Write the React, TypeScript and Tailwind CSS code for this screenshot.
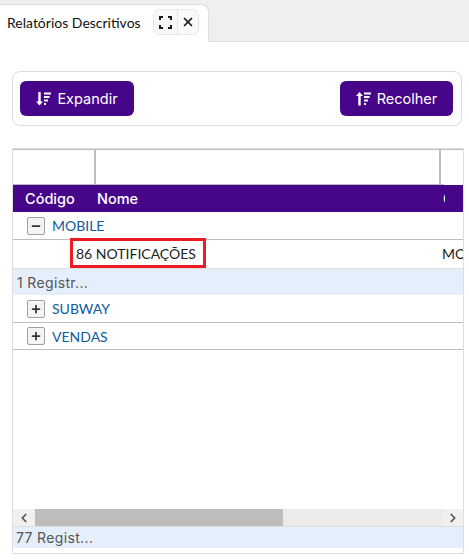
import { X, ChevronLeft, ChevronRight, Minus, Plus } from "lucide-react";

function SortIcon({ up }: { up?: boolean }) {
  return (
    <svg width="15" height="14" viewBox="0 0 15 14" fill="white" className="shrink-0">
      {up ? (
        <path d="M3.5 0 L7 4 L4.7 4 L4.7 13.5 L2.3 13.5 L2.3 4 L0 4 Z" />
      ) : (
        <path d="M3.5 13.5 L7 9.5 L4.7 9.5 L4.7 0 L2.3 0 L2.3 9.5 L0 9.5 Z" />
      )}
      <rect x="8" y="0.5" width="7" height="2" />
      <rect x="8" y="4" width="5.5" height="2" />
      <rect x="8" y="7.5" width="4" height="2" />
      <rect x="8" y="11" width="2" height="2" />
    </svg>
  );
}

function CornersIcon() {
  return (
    <svg width="13" height="13" viewBox="0 0 13 13" fill="none" stroke="#1a1a1a" strokeWidth="2">
      <path d="M1 4 V1 H4 M9 1 H12 V4 M12 9 V12 H9 M4 12 H1 V9" />
    </svg>
  );
}

function ToolButton({ label, up, width }: { label: string; up?: boolean; width: string }) {
  return (
    <button className={`flex h-[35px] ${width} items-center justify-center gap-[6px] rounded-md bg-[#47068a] font-['Inter',sans-serif] text-[14.5px] text-white`}>
      <SortIcon up={up} />
      {label}
    </button>
  );
}

function GroupRow({ name, open, height = "h-[28px]" }: { name: string; open?: boolean; height?: string }) {
  return (
    <div className={`flex ${height} shrink-0 items-center border-b border-[#bdbdbd] pl-[14px]`}>
      <span className="flex h-[18px] w-[18px] items-center justify-center rounded-[2px] border border-[#a0a0a0] bg-[#f4f4f4] text-[#333]">
        {open ? <Minus size={12} strokeWidth={3.5} /> : <Plus size={12} strokeWidth={3.5} />}
      </span>
      <span className="ml-[7px] text-[14px] text-[#0f5a9c]">{name}</span>
    </div>
  );
}

export default function App() {
  return (
    <div className="flex h-[560px] w-[469px] flex-col overflow-hidden bg-white font-['Lato','Liberation_Sans',sans-serif]">
      <div className="flex h-[42px] shrink-0 items-end border-b border-[#dedede] bg-[#efefef]">
        <div className="-mb-px flex h-[38px] w-[209px] items-center rounded-tr-lg border-t border-r border-[#dedede] bg-white pb-[3px] pl-[7px]">
          <span className="text-[14px] text-[#111]">Relatórios Descritivos</span>
          <div className="ml-[12px] flex h-[26px] w-[46px] rounded-md border border-[#e2e5ea] bg-[#f8f9fb]">
            <span className="flex w-[24px] items-center justify-center border-r border-[#e2e5ea]">
              <CornersIcon />
            </span>
            <span className="flex flex-1 items-center justify-center text-[#1a1a1a]">
              <X size={14} strokeWidth={3} />
            </span>
          </div>
        </div>
      </div>

      <div className="mx-3 mt-[29px] flex h-[55px] w-[450px] shrink-0 items-center justify-between rounded-lg border border-[#dcdcdc] pr-2 pl-[7px]">
        <ToolButton label="Expandir" width="w-[114px]" />
        <ToolButton label="Recolher" up width="w-[113px]" />
      </div>

      <div className="mt-[22px] ml-3 flex h-[406px] w-[452px] flex-col overflow-hidden border border-[#dedede] text-[14px]">
        <div className="flex h-[36px] shrink-0 border-t border-[#bdbdbd]">
          <div className="w-[83px] border-r-2 border-b border-[#bdbdbd]" />
          <div className="w-[345px] border-r-2 border-b border-[#bdbdbd]" />
          <div className="w-[3px] border-b border-[#bdbdbd]" />
        </div>
        <div className="flex h-[27px] shrink-0 items-center whitespace-nowrap bg-[#47068a] font-['Inter',sans-serif] text-[14.5px] font-medium text-white">
          <span className="w-[84px] shrink-0 pl-3">Código</span>
          <span className="w-[346px] shrink-0">Nome</span>
          <span className="w-[2px] shrink-0 overflow-hidden">Grupo</span>
        </div>
        <GroupRow name="MOBILE" open />
        <div className="relative flex h-[28px] shrink-0 items-center whitespace-nowrap pb-[2px] text-[#222]">
          <span className="pl-[63px]">86 NOTIFICAÇÕES</span>
          <span className="absolute left-[429px]">MOBILE</span>
          <span className="absolute top-[-2px] left-[57px] h-[30px] w-[136px] border-[3px] border-[#ed1c24]" />
        </div>
        <div className="flex h-[27px] shrink-0 items-center border-t border-[#dedede] bg-[#e5effc] pl-[4px] font-['Inter',sans-serif] text-[14px] tracking-[0.35px] text-[#555]">
          1 Registr...
        </div>
        <GroupRow name="SUBWAY" />
        <GroupRow name="VENDAS" height="h-[27px]" />
        <div className="flex-1" />
        <div className="flex h-[18px] shrink-0 items-stretch border-b border-[#dedede] bg-[#ebebeb] text-[#555]">
          <span className="flex w-[22px] items-center justify-center bg-[#f0f0f0]">
            <ChevronLeft size={14} strokeWidth={3} />
          </span>
          <span className="w-[248px] bg-[#bdbdbd]" />
          <span className="flex-1" />
          <span className="flex w-[20px] items-center justify-center bg-[#f0f0f0]">
            <ChevronRight size={14} strokeWidth={3} />
          </span>
        </div>
        <div className="flex h-[21px] shrink-0 items-center bg-[#e5effc] pl-[3px] font-['Inter',sans-serif] text-[14px] tracking-[0.35px] text-[#555]">
          77 Regist...
        </div>
        <div className="h-[5px] shrink-0" />
      </div>
    </div>
  );
}
